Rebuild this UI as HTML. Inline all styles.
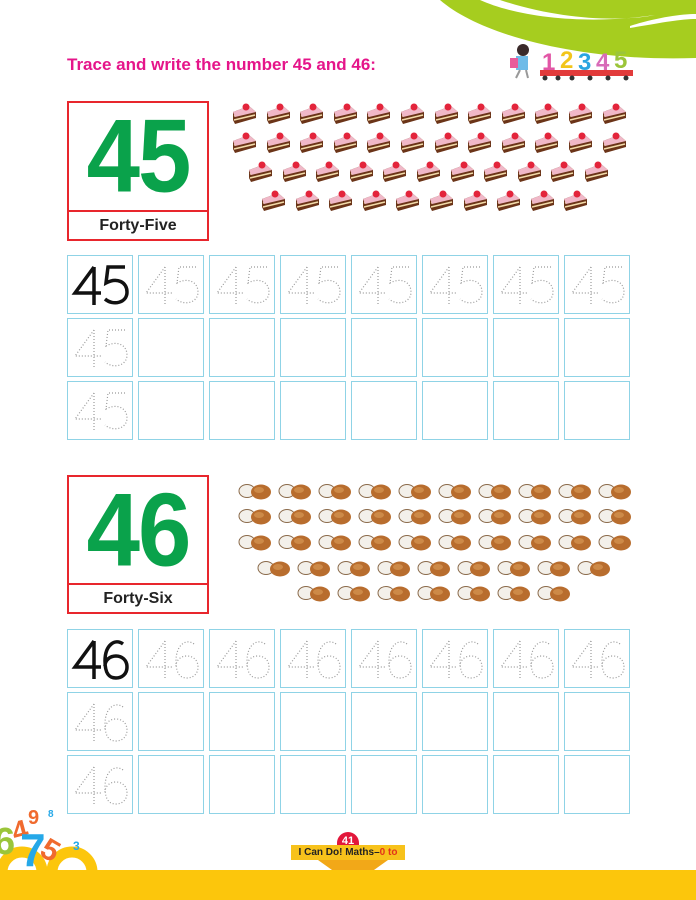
<!DOCTYPE html>
<html><head><meta charset="utf-8">
<style>
*{margin:0;padding:0;box-sizing:border-box}
body{width:696px;height:900px;position:relative;overflow:hidden;background:#fff;font-family:"Liberation Sans",sans-serif}
.abs{position:absolute}
.cell{position:absolute;width:66px;height:59px;border:1.5px solid #8fd3e6}
.box{position:absolute;left:67px;width:142px;border:2px solid #e8262d}
.big{position:absolute;left:0;right:0;text-align:center;font-weight:bold;color:#0aa24b;font-size:96px;letter-spacing:-2px;transform:scaleY(1.08)}
.lab{position:absolute;left:0;right:0;bottom:0;height:29px;border-top:2px solid #e8262d;text-align:center;font-size:16px;font-weight:bold;line-height:27px;color:#222;font-family:"Liberation Sans Narrow","Liberation Sans",sans-serif}
.cake{position:absolute;width:26px;height:22px}
.coco{position:absolute;width:34px;height:18px}
</style></head><body>
<svg class="abs" style="left:440px;top:0" width="256" height="62" viewBox="0 0 256 62">
<path d="M0 0 C40 35 140 62 256 58 L256 0 Z" fill="#a6cd1f"/>
<path d="M40 0 C80 18 150 25 215 15 C180 22 120 20 60 0Z" fill="#fff"/>
<path d="M190 26 C215 18 240 14 256 14 L256 19 C240 19 220 23 190 28Z" fill="#fff"/>
</svg>
<div class="abs" style="left:67px;top:55px;font-size:17px;font-weight:bold;color:#e5158a;font-family:'Liberation Sans Narrow','Liberation Sans',sans-serif">Trace and write the number 45 and 46:</div>
<svg class="abs" style="left:500px;top:40px" width="140" height="45">
<circle cx="23" cy="10" r="6" fill="#3a2a2a"/><rect x="16" y="16" width="12" height="14" fill="#6fbbe8"/><rect x="10" y="18" width="8" height="10" fill="#e85b9b"/>
<line x1="20" y1="30" x2="16" y2="38" stroke="#999" stroke-width="2"/><line x1="26" y1="30" x2="28" y2="38" stroke="#999" stroke-width="2"/>
<rect x="40" y="30" width="93" height="6" fill="#e23b3b"/>
<g fill="#333"><circle cx="45" cy="38" r="2.5"/><circle cx="58" cy="38" r="2.5"/><circle cx="72" cy="38" r="2.5"/><circle cx="90" cy="38" r="2.5"/><circle cx="108" cy="38" r="2.5"/><circle cx="126" cy="38" r="2.5"/></g>
<g font-family="Liberation Sans" font-weight="bold" font-size="24"><text x="42" y="30" fill="#e256a6">1</text><text x="60" y="28" fill="#f2c51b">2</text><text x="78" y="30" fill="#2aa5e0">3</text><text x="96" y="30" fill="#d86bb8">4</text><text x="114" y="28" fill="#9bc53a">5</text></g>
</svg>
<div class="box" style="top:101px;height:140px"><div class="big" style="top:0px;line-height:108px">45</div><div class="lab">Forty-Five</div></div>
<div class="box" style="top:475px;height:139px"><div class="big" style="top:0px;line-height:108px">46</div><div class="lab">Forty-Six</div></div>
<div id="items"></div>
<div class="abs" style="left:0;top:870px;width:696px;height:30px;background:#fcc60c"></div>
<svg class="abs" style="left:0;top:790px" width="110" height="82">
<circle cx="22" cy="82" r="20" fill="none" stroke="#fcc60c" stroke-width="11"/><circle cx="72" cy="82" r="20" fill="none" stroke="#fcc60c" stroke-width="11"/>
<g font-family="Liberation Sans" font-weight="bold"><text x="-6" y="64" font-size="38" fill="#9bc53a">6</text><text x="12" y="50" font-size="28" fill="#f06a2e" transform="rotate(-15 20 40)">4</text><text x="28" y="34" font-size="20" fill="#f06a2e">9</text><text x="20" y="76" font-size="46" fill="#25a8e8">7</text><text x="42" y="70" font-size="30" fill="#f06a2e" transform="rotate(30 50 60)">5</text><text x="73" y="60" font-size="12" fill="#25a8e8">3</text><text x="48" y="27" font-size="10" fill="#25a8e8">8</text></g>
</svg>
<div class="abs" style="left:337px;top:832px;width:22px;height:18px;border-radius:11px 11px 0 0;background:#e2173b;color:#fff;font-size:11px;font-weight:bold;text-align:center;line-height:18px">41</div>
<div class="abs" style="left:291px;top:845px;width:114px;height:15px;background:#f7c21b;font-size:10px;font-weight:bold;text-align:center;line-height:15px;color:#222;font-family:'Liberation Sans Narrow','Liberation Sans',sans-serif">I Can Do! Maths–<span style="color:#e2331b">0 to 100</span></div>
<div class="abs" style="left:318px;top:860px;width:70px;height:10px;background:#f2a818;clip-path:polygon(0 0,100% 0,80% 100%,20% 100%)"></div>
<script>
var items=document.getElementById('items'),h='';
var cake='<svg class="cake" style="left:LPX;top:TPX" viewBox="0 0 26 22"><path d="M2 10 L18 4 L25 10 L25 16 L4 22 L2 18 Z" fill="#6b3418"/><path d="M3 14 L24 9 M3 18 L24 13" stroke="#f3dcaa" stroke-width="1.6"/><path d="M2 10 L18 4 L25 10 L4 15Z" fill="#f0b8c8"/><circle cx="15" cy="5" r="3.5" fill="#e3243b"/></svg>';
function row(n,x0,dx,y,tpl){for(var i=0;i<n;i++)h+=tpl.replace('L',x0+i*dx).replace('T',y);}
row(12,231,33.6,102,cake);row(12,231,33.6,131,cake);row(11,247,33.6,160,cake);row(10,260,33.6,189,cake);
var co='<svg class="coco" style="left:LPX;top:TPX" viewBox="0 0 34 18"><ellipse cx="9" cy="9" rx="8" ry="6.5" fill="#f3f0ea" stroke="#8a6a4a" stroke-width="1"/><ellipse cx="23" cy="10" rx="10" ry="7.5" fill="#b86d2e"/><ellipse cx="21" cy="8" rx="5" ry="3" fill="#cd8a48"/></svg>';
row(10,238,40,482,co);row(10,238,40,507,co);row(10,238,40,533,co);row(9,257,40,559,co);row(7,297,40,584,co);
var xs=[67,138,209,280,351,422,493,564];
function num(d){var p4='M27 12 L27 50 M27 12 L8 38 L34 38';var p5='M58 12 L41 12 L39 28 C50 22 60 27 60 37 C60 48 46 51 38 44';var p6='M56 15 C48 9 38 16 38 32 C38 46 43 49 49 49 C55 49 60 45 60 38 C60 31 55 27 49 27 C43 27 38 31 38 37';return p4+' '+(d==5?p5:p6);}
function grid(y0,d){var ys=[y0,y0+63,y0+126];for(var r=0;r<3;r++)for(var c=0;c<8;c++){var x=xs[c],y=ys[r];h+='<div class="cell" style="left:'+x+'px;top:'+y+'px"></div>';
if(r==0&&c==0)h+='<svg class="abs" style="left:'+x+'px;top:'+y+'px" width="66" height="59"><path d="'+num(d)+'" fill="none" stroke="#111" stroke-width="3.5"/></svg>';
else if(r==0||c==0)h+='<svg class="abs" style="left:'+x+'px;top:'+y+'px" width="66" height="59"><path d="'+num(d)+'" fill="none" stroke="#999" stroke-width="1.2" stroke-dasharray="1 2"/></svg>';}}
grid(255,5);grid(629,6);
items.innerHTML=h;
</script>
</body></html>
